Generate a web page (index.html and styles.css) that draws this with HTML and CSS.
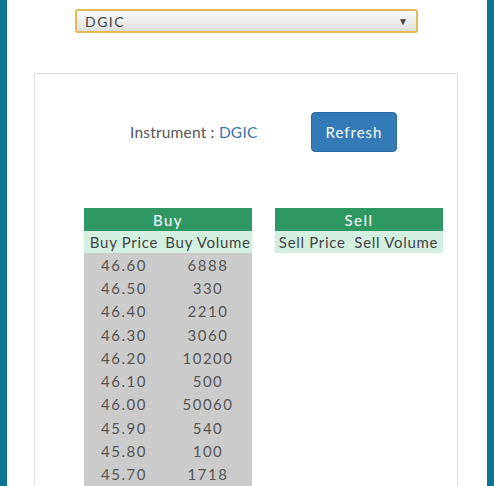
FILE: index.html
```html
<!DOCTYPE html>
<html>
<head>
<meta charset="utf-8">
<link rel="stylesheet" href="styles.css">
</head>
<body>
<div class="frame">
  <div class="select">
    <span class="select-value">DGIC</span>
    <span class="select-arrow">&#9660;</span>
  </div>
  <div class="card">
    <div class="instrument-row">
      <div class="instrument">Instrument : <span class="sym">DGIC</span></div>
      <button class="btn">Refresh</button>
    </div>
    <div class="tables">
      <table class="book">
        <thead>
          <tr class="head"><th colspan="2">Buy</th></tr>
          <tr class="sub"><th>Buy Price</th><th>Buy Volume</th></tr>
        </thead>
        <tbody>
          <tr><td>46.60</td><td>6888</td></tr>
          <tr><td>46.50</td><td>330</td></tr>
          <tr><td>46.40</td><td>2210</td></tr>
          <tr><td>46.30</td><td>3060</td></tr>
          <tr><td>46.20</td><td>10200</td></tr>
          <tr><td>46.10</td><td>500</td></tr>
          <tr><td>46.00</td><td>50060</td></tr>
          <tr><td>45.90</td><td>540</td></tr>
          <tr><td>45.80</td><td>100</td></tr>
          <tr><td>45.70</td><td>1718</td></tr>
        </tbody>
      </table>
      <table class="book">
        <thead>
          <tr class="head"><th colspan="2">Sell</th></tr>
          <tr class="sub"><th>Sell Price</th><th>Sell Volume</th></tr>
        </thead>
      </table>
    </div>
  </div>
</div>
</body>
</html>
```
FILE: styles.css
```css
html, body {
  margin: 0;
  padding: 0;
  background: #ffffff;
  height: 486px;
  overflow: hidden;
}
body {
  font-family: Lato, "Open Sans", sans-serif;
  color: #555555;
}
.frame {
  box-sizing: border-box;
  width: 494px;
  height: 486px;
  border-left: 7px solid #0e7590;
  border-right: 7px solid #0e7590;
  padding-top: 9px;
  display: flex;
  flex-direction: column;
}
.select {
  box-sizing: border-box;
  margin-left: 68px;
  width: 343px;
  height: 24px;
  border: 2px solid #e3bc58;
  border-radius: 3px;
  background: linear-gradient(#fbfbfb, #dedede);
  display: flex;
  align-items: center;
  justify-content: space-between;
  padding: 0 8px 0 8px;
  font-size: 14px;
  letter-spacing: 1.5px;
  color: #444;
}
.select-arrow {
  font-size: 10px;
  color: #444;
  letter-spacing: 0;
}
.card {
  box-sizing: border-box;
  margin-top: 40px;
  margin-left: 27px;
  width: 424px;
  flex: 1;
  border: 1px solid #dddddd;
  border-bottom: none;
  padding-top: 38px;
}
.instrument-row {
  display: flex;
  align-items: center;
  padding-left: 95px;
}
.instrument {
  font-size: 15.5px;
  letter-spacing: 0.2px;
  color: #555;
  width: 181px;
}
.sym {
  color: #3a75a8;
}
.btn {
  box-sizing: border-box;
  width: 86px;
  height: 40px;
  background: #337ab7;
  color: #ffffff;
  border: 1px solid #2e6da4;
  border-radius: 4px;
  font-family: inherit;
  font-size: 15px;
  letter-spacing: 1px;
  padding: 0;
}
.tables {
  display: flex;
  gap: 23px;
  margin-top: 56px;
  padding-left: 49px;
  align-items: flex-start;
}
.book {
  width: 168px;
  border-collapse: collapse;
  font-size: 15px;
  letter-spacing: 0.4px;
}
.book th {
  font-weight: normal;
  padding: 0;
  white-space: nowrap;
}
.head th {
  background: #2f9862;
  color: #ffffff;
  height: 23px;
  letter-spacing: 1.5px;
}
.sub th {
  background: #d3efe0;
  color: #444;
  height: 22px;
  letter-spacing: 0.7px;
}
.book td {
  background: #cbcbcb;
  text-align: center;
  height: 23.3px;
  padding: 0;
  color: #555;
  letter-spacing: 1.5px;
}
.book td:first-child {
  width: 80px;
}
```
